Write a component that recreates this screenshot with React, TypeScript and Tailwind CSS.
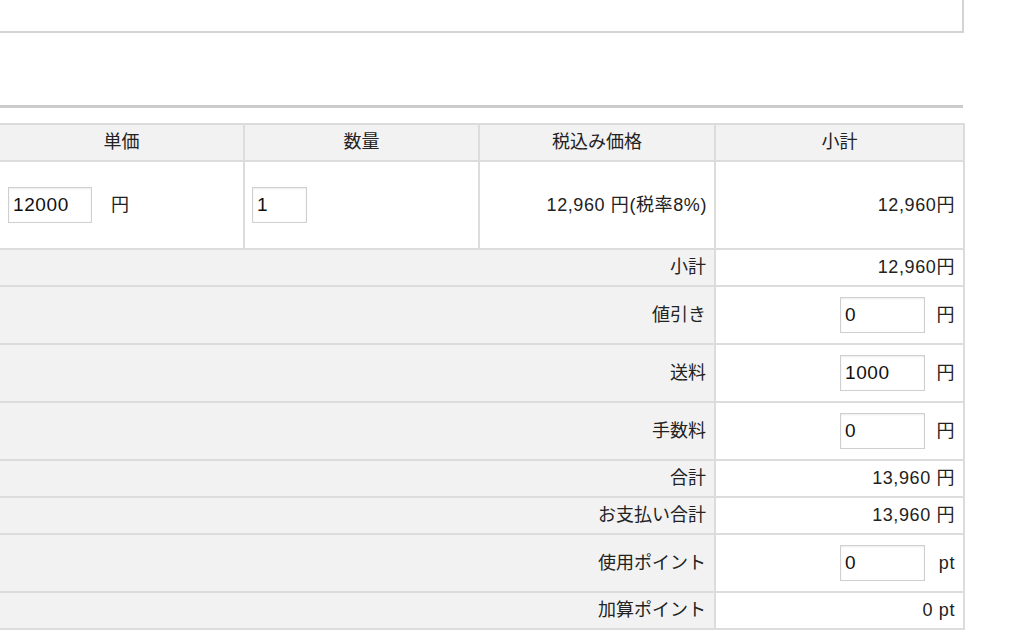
import { useState } from 'react';

const font = { fontFamily: '"Liberation Sans", "Noto Sans CJK JP", sans-serif' };

function Field({ value, width }: { value: string; width: string }) {
  const [v, setV] = useState(value);
  return (
    <input
      value={v}
      onChange={(e) => setV(e.target.value)}
      className={`${width} h-[36px] border border-[#cfcfcf] bg-white px-[4px] text-[19px] tracking-[0.6px] text-[#111] shadow-[inset_0_1px_2px_rgba(0,0,0,0.08)] outline-none`}
      style={font}
    />
  );
}

type Summary = {
  label: string;
  value?: string;
  input?: string;
  unit?: string;
  tall?: boolean;
};

const summaries: Summary[] = [
  { label: '小計', value: '12,960円' },
  { label: '値引き', input: '0', unit: '円', tall: true },
  { label: '送料', input: '1000', unit: '円', tall: true },
  { label: '手数料', input: '0', unit: '円', tall: true },
  { label: '合計', value: '13,960 円' },
  { label: 'お支払い合計', value: '13,960 円' },
  { label: '使用ポイント', input: '0', unit: 'pt', tall: true },
  { label: '加算ポイント', value: '0 pt' },
];

export default function App() {
  const cell = 'border-2 border-[#dcdcdc]';
  return (
    <div className="h-[636px] w-[1024px] overflow-hidden bg-white text-[18px] text-[#222]" style={font}>
      {/* 上部ボックス */}
      <div className="-ml-[2px] h-[33px] w-[966px] border-2 border-t-0 border-[#d4d4d4]" />

      <div className="mt-[72px] h-[3px] w-[963px] bg-[#cccccc]" />

      <div className="mt-[15px] -ml-[2px]">
        <table className="w-[965px] table-fixed border-collapse">
          <colgroup>
            <col className="w-[245px]" />
            <col className="w-[235px]" />
            <col className="w-[236px]" />
            <col className="w-[249px]" />
          </colgroup>
          <thead>
            <tr className="h-[37px] bg-[#f2f2f2]">
              <th className={`${cell} font-normal`}>単価</th>
              <th className={`${cell} font-normal`}>数量</th>
              <th className={`${cell} font-normal`}>税込み価格</th>
              <th className={`${cell} font-normal`}>小計</th>
            </tr>
          </thead>
          <tbody>
            <tr className="h-[88px]">
              <td className={`${cell} pl-[8px]`}>
                <div className="flex items-center gap-[19px]">
                  <Field value="12000" width="w-[84px]" />
                  <span>円</span>
                </div>
              </td>
              <td className={`${cell} pl-[7px]`}>
                <Field value="1" width="w-[55px]" />
              </td>
              <td className={`${cell} pr-[7px] text-right tracking-[0.6px]`}>12,960 円(税率8%)</td>
              <td className={`${cell} pr-[8px] text-right tracking-[0.6px]`}>12,960円</td>
            </tr>
            {summaries.map((s) => (
              <tr key={s.label} className={s.tall ? 'h-[58px]' : 'h-[37px]'}>
                <td colSpan={3} className={`${cell} bg-[#f2f2f2] pr-[8px] text-right`}>
                  {s.label}
                </td>
                <td className={`${cell} pr-[8px] text-right tracking-[0.6px]`}>
                  {s.input !== undefined ? (
                    <div className="flex items-center justify-end gap-[10px]">
                      <Field value={s.input} width="w-[85px]" />
                      <span className="inline-block min-w-[20px] text-right">{s.unit}</span>
                    </div>
                  ) : (
                    s.value
                  )}
                </td>
              </tr>
            ))}
          </tbody>
        </table>
      </div>
    </div>
  );
}
